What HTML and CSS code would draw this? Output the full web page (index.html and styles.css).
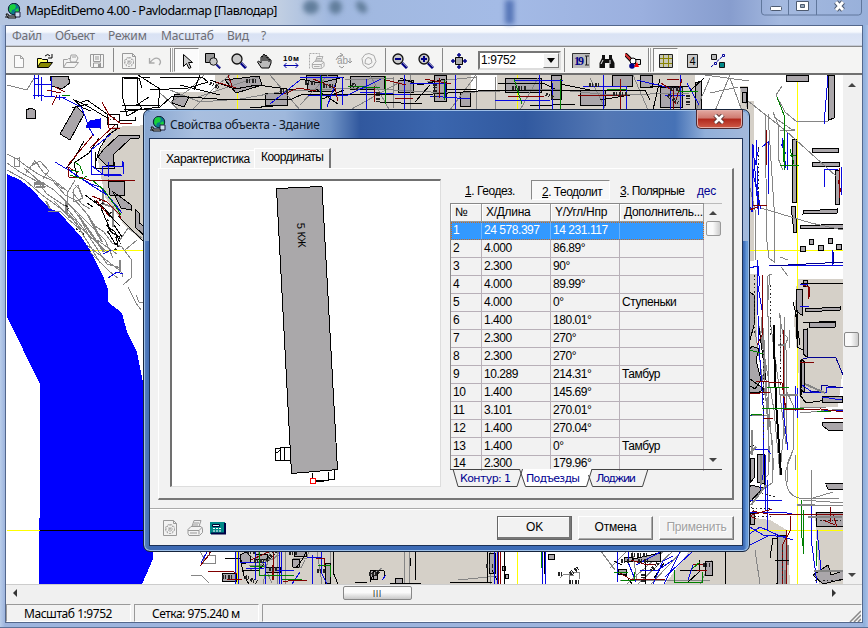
FILE: index.html
```html
<!DOCTYPE html>
<html lang="ru">
<head>
<meta charset="utf-8">
<title>MapEditDemo</title>
<link rel="stylesheet" href="styles.css">
</head>
<body>
<svg width="0" height="0" class="defs">
  <defs>
    <symbol id="app" viewBox="0 0 16 16">
      <circle cx="9" cy="6" r="5.7" fill="#0a7a8a" stroke="#123"/>
      <path d="M5 2l4-1 2 2-1 3-3 1-1 3-2-3zM10 7l3-2 1 3-2 3z" fill="#19d03a"/>
      <path d="M10 9h5v5h-5z" fill="#cde" stroke="#224"/>
      <path d="M1 11h2l1 2h6l1 2H3zM0 14h4" stroke="#111" fill="#bbb"/>
    </symbol>
    <symbol id="sheet" viewBox="0 0 16 16">
      <path d="M1.500 .5h10l3 3v12h-13zM11.500 .5v3h3" fill="none" stroke="#999"/>
      <circle cx="8" cy="9" r="4.500" fill="none" stroke="#999" stroke-dasharray="2 1"/>
      <path d="M8 4v10M3 9h10M5 6l6 6M11 6l-6 6" stroke="#aaa" stroke-dasharray="2 1"/>
    </symbol>
    <symbol id="printer" viewBox="0 0 16 16">
      <path d="M5 6.500L7 .5h7l-2 6M1 9.500l3-3h10l1.500 2v4l-3 3H2l-1-2zM1 10.500h11v4M12 10.500l3-3M3 13h7M7 3h5M6 5h5" fill="none" stroke="#999"/>
    </symbol>
    <symbol id="lens" viewBox="0 0 16 16">
      <path d="M10 10l5 5" stroke="#008" stroke-width="3"/>
      <path d="M10.500 9.500l5 5" stroke="#88a" stroke-width="1"/>
      <circle cx="6" cy="6" r="5" fill="#c8c8c8" stroke="#111" stroke-width="1.300"/>
    </symbol>
  </defs>
</svg>
<div class="window">
  <header class="titlebar">
    <svg class="app-icon"><use href="#app"/></svg>
    <span class="title">MapEditDemo 4.00 - Pavlodar.map [Павлодар]</span>
    <i class="blob b1"></i><i class="blob b2"></i><i class="blob b3"></i><i class="blob b4"></i>
    <div class="winbuttons">
      <svg width="104" height="16">
        <path d="M1.500 0v12q0 3 3 3h94q3 0 3-3V0M28.500 0v15M56.500 0v15" fill="none" stroke="#60779c"/>
        <rect x="10.500" y="6.500" width="11" height="4" rx="1" fill="#fff" stroke="#4d5a70"/>
        <path d="M36.500 1.500h12v9h-12z" fill="#fff" stroke="#4d5a70"/><path d="M40.500 4.500h4v3h-4z" fill="#9ab" stroke="#4d5a70"/>
        <path d="M76 2l7 8M83 2l-7 8" stroke="#4d5a70" stroke-width="5"/><path d="M76 2l7 8M83 2l-7 8" stroke="#fff" stroke-width="3"/>
      </svg>
    </div>
  </header>
  <div class="client">
    <nav class="menubar">
      <span class="m1">Файл</span><span class="m2">Объект</span><span class="m3">Режим</span><span class="m4">Масштаб</span><span class="m5">Вид</span><span>?</span>
    </nav>
    <div class="toolbar">
      <div class="tool"><svg viewBox="0 0 16 16"><path d="M3.500 2.500h6l3 3v9h-9zM9.500 2.500v3h3" fill="#fafafa" stroke="#a0a0a0"/></svg></div>
      <div class="tool"><svg viewBox="0 0 16 16"><path d="M.5 14.500v-9h4l1 1h5v3" fill="#ff6" stroke="#000"/><path d="M.5 14.500l3-5h12l-4 5z" fill="#880" stroke="#000"/><path d="M8 3q3-3 5 0M15 1v4h-4" fill="none" stroke="#000"/></svg></div>
      <div class="tool"><svg viewBox="0 0 16 16"><path d="M.5 14.500v-8h4l1-1h2M.5 14.500l3-5h12l-4 5zM7 7l1-5h5l2 3-2 4H8zM9 4h4" fill="none" stroke="#a0a0a0"/></svg></div>
      <div class="tool"><svg viewBox="0 0 16 16"><path d="M1.500 1.500h13v13h-12l-1-1zM4.500 1.500v7h7v-7M4.500 14v-4h7v4M6 4h4M6 6h4" fill="none" stroke="#999"/><path d="M9 11h2v3H9z" fill="#999"/></svg></div>
      <i class="sep"></i>
      <div class="tool"><svg><use href="#sheet"/></svg></div>
      <div class="tool"><svg viewBox="0 0 16 16"><path d="M2.500 5v5h5M3 9.500Q8 3 12 6q3 3 0 6" fill="none" stroke="#aaa" stroke-width="1.300"/></svg></div>
      <i class="sep double"></i>
      <div class="tool pressed"><svg viewBox="0 0 16 16"><path d="M4.500 1.500v12l3-3 2.500 5 2-1-2.500-5h4z" fill="#ccc" stroke="#000"/></svg></div>
      <div class="tool"><svg viewBox="0 0 16 16"><path d="M.5 .5h9v9h-9z" fill="#999" stroke="#000"/><svg x="4" y="4" width="12" height="12"><use href="#lens"/></svg></svg></div>
      <div class="tool"><svg><use href="#lens"/></svg></div>
      <div class="tool"><svg viewBox="0 0 16 16"><path d="M4.500 15l-4-6 1-1 2.500 2V4q1-1.500 2 0V2q1-1.500 2 0v1q1-1.500 2 0v2q1.500-1 2 0v2q1.500-1 2 0v3l-2 5z" fill="#bbb" stroke="#000"/><path d="M6 4v4M8 3v5M10 4v4M12 6v3" stroke="#000"/></svg></div>
      <div class="tool"><svg viewBox="0 0 16 16"><text x="0" y="8" class="ten" textLength="16">10м</text><path d="M1 12.500h14M3.500 10L1 12.500 3.500 15M12.500 10l2.500 2.500-2.500 2.500" stroke="#00a" fill="none"/></svg></div>
      <div class="tool"><svg viewBox="0 0 16 16"><path d="M.5 15.500V.5h10v3" fill="none" stroke="#aaa" stroke-dasharray="2 1"/><svg x="2" y="3" width="14" height="13"><use href="#printer"/></svg></svg></div>
      <div class="tool wide"><svg viewBox="0 0 18 16" width="18"><text x="3" y="11" class="ab">ab</text><path d="M2 7q1-4 6-5M6 0l3 2-3 2M16 5v5M14 8l2 2 2-2M10 13l-2 2-3-2" fill="none" stroke="#999"/></svg></div>
      <div class="tool"><svg viewBox="0 0 16 16"><path d="M8 .5l5 2 2 6-3 5-5 2-5-4-1-6 3-4zM7 4.500l3 1 1 4-3 2-4-1 .5-4z" fill="none" stroke="#aaa"/></svg></div>
      <i class="sep s5"></i>
      <div class="tool"><svg viewBox="0 0 16 16"><use href="#lens"/><path d="M3 6h6" stroke="#008" stroke-width="2"/></svg></div>
      <div class="tool"><svg viewBox="0 0 16 16"><use href="#lens"/><path d="M3 6h6M6 3v6" stroke="#008" stroke-width="2"/></svg></div>
      <i class="sep s7"></i>
      <div class="tool"><svg viewBox="0 0 16 16"><path d="M4.500 4.500h7v7h-7z" fill="#aaa" stroke="#000"/><path d="M8 0v4M8 12v4M0 8h4M12 8h4M6 2h4M6 14h4M2 6v4M14 6v4" stroke="#008" stroke-width="1.500"/></svg></div>
      <div class="combo"><span>1:9752</span><b class="combo-btn"><svg width="9" height="5"><path d="M0 0h8L4 5z"/></svg></b></div>
      <i class="sep s7"></i>
      <div class="tool"><svg viewBox="0 0 18 16" class="w18"><path d="M0 0h18v15H0z" fill="#bcbcbc"/><path d="M.5 15V.5H18" fill="none" stroke="#333"/><text x="2" y="12" class="nineteen" textLength="10">19</text><path d="M13 3h1.500v9H13M17 3h-2.500M17 12h-2.500" fill="none" stroke="#222"/></svg></div>
      <div class="tool"><svg viewBox="0 0 16 16"><path d="M3 2h3v4h4V2h3v3l2.500 5v5h-5v-5H6v5H.5v-5L3 5z" fill="#111"/><path d="M4 7l-2 4M11 7v4" stroke="#eee"/></svg></div>
      <div class="tool"><svg viewBox="0 0 16 16"><path d="M0 1l6 6" stroke="#000" stroke-width="4"/><path d="M0 1l6 6" stroke="#d33" stroke-width="2"/><path d="M10.500 6.500h5v5h-5z" fill="#ddd" stroke="#000"/><circle cx="8" cy="8" r="3" fill="#fff" stroke="#000"/><circle cx="7" cy="13" r="2.800" fill="#008"/><path d="M12 9l2 5H9z" fill="#f00"/></svg></div>
      <i class="sep s7 double"></i>
      <div class="tool pressed"><svg viewBox="0 0 16 16"><path d="M1.500 1.500h13v13h-13z" fill="#c8c8b8" stroke="#222"/><path d="M5.500 2v12M10.500 2v12M2 5.500h12M2 10.500h12" stroke="#8a8400"/></svg></div>
      <div class="tool"><svg viewBox="0 0 16 16"><path d="M3.500 1.500h10v13h-10z" fill="#c8c8c8" stroke="#222"/><text x="5.500" y="12" class="four">4</text></svg></div>
      <div class="tool"><svg viewBox="0 0 16 16"><path d="M1.500 1.500h5v5h-5z" fill="#bbb" stroke="#111"/><path d="M9.500 9.500h5v5h-5z" fill="#088" stroke="#111"/><path d="M1 14L14 2" stroke="#009" stroke-dasharray="3 1"/><path d="M12.500 1.500h2v2h-2zM4.500 9.500h2v2h-2z" fill="#fff" stroke="#009"/></svg></div>
    </div>
    <main class="view">
      <svg class="map" viewBox="7 75 836 509" width="836" height="509" shape-rendering="crispEdges">
        <!-- land parcels -->
        <g class="land">
          <path d="M113 127l36-2v122l-25-22-19-28-8-42zM210 92h488v40H210zM215 75h256v30H215zM497 75h198v40H497zM176 92h40v30h-40z"/>
          <path d="M740 86h8v15h6v160h-14zM740 274h17v115h-17zM797 279h46v88l-5 40h-38l-2-45-4-40z"/>
          <path d="M740 516l30 4 17 10 3 54h-40zM235 550h263v34H235zM815 512h28v72h-24zM690 550h60v34h-85z"/>
        </g>
        <path class="water" d="M7 174l13 6 13 10 10 12 7 7 7 2 9 9 9 10 7 8 8 12 5 10 8 16 5 13v13l14 11 5 19 10 20 16 80v127l-6 14-6 13H39v-51l1-33V384L7 317z"/>
        <!-- coordinate grid -->
        <path class="y" d="M7 250.500h836M7 530.500h836M237.500 75v509M517.500 75v509M797.500 75v509"/>
        <path class="k" d="M7 250.500h83M40 530.500h109"/>
        <!-- river bank -->
        <g class="g">
          <path d="M7 154l10 5 9 7 12 8 15 7 12 14 10 5 12 14 8 12 9 6 8 11 10 4 9 12v19l-8 7M7 163l13 9 18 10 9 12 18 12 18 22 11 16 13 20 14 4M24 168l14 12 16 10 20 20 18 25 12 17M7 170l18 10 17 15 14 10 16 13 17 26 11 19M34 160l10 13 16 12 8 7M48 211l12 0 8 8 12 10 8 14M75 180l-7 12-1 20 9 9 5 9"/>
          <path d="M14 159v7h5v-8zM26 173l9-12 5 6M31 166l9-5 9 10-6 8M34 182h9v5h-8zM36 186h10M75 185l4 4 3 8M54 201l30 30 24 22M60 195l45 45 8 18M72 192l10 12 8 5M30 173l15 15M128 287l8 16 5 7M136 295l3 7h6M7 85l20 5 7-12M120 269l3 8M87 245l32 25M90 252l20 20 8 6M80 218l10 20M97 240l20 14M55 183l8 6"/>
          <path class="thick" d="M35 184h10M120 260v12M103 188v16l10 3v20M108 180l10 6v12M50 209l-4-8M66 201v12l4 5M78 215l26 37M88 215l14 27"/>
          <path d="M73 190l5-5 5 13-10 4zM120 240l8-12 14 10M125 250l12-10"/>
        </g>
        <!-- north-west district -->
        <path class="b" d="M26 110l5-2 4 2v8H26zM80 110l4 4-14 26-10-6 16-28zM50 76h18l2 7-8 6-10-3zM108 181h16v14h-14zM129 135h10v3l-9 1-17 16v10h-7l-8-8 5-7 16-15zM118 195l13 10v5l-10-2-8-16zM135 209l4 4v10l10 6-3 8-11-10z"/>
        <path class="k" d="M122 77h15v25l5 6-15 8-2-10-3-10zM142 77l8 1M75 100l14 7 20 12M80 103l7-3 20 14v10h10v5l-9 6-8 13-4 13M72 108l16-4M73 99l10 9 8 3M109 114h10v9M124 110l25-1M124 79l15-1 3 10M149 97l-14 9M119 120h16v-3M99 138l-10 15-15 10 3 14M84 141l-10 18-8 9M95 152v16h19v-6M94 200l9 7 10 11M105 218l7 15 8 4-4 8-8-13M101 208l5 12M93 207l-6-4M120 242l-5-10-9-7M85 195l15 11 20 20M118 216l31 31M107 225l3 6 6 4 2 11M114 225l8 12"/>
        <path class="h" d="M111 212l-4 10M107 232h7l2 7M103 204l-5-6M66 205l3 7M76 229l8 5M115 250l5-7M115 118l-8 3M120 260"/>
        <path class="u fill" d="M86 127l4-6 10-2v9z"/>
        <path class="u" d="M34 75v24M38 75v22M34 84h18M33 95l33 3M51 77v20M63 98l18 9 4 9 4 12 5 8M55 162l15 9 12 8 9 6 16 10 14 17M67 167l8 8 16 9 9 3 15 17 7 9M91 163v-13l20-16M91 160v14h11v-8h20v-5M92 166l12 9h18M91 174h30M108 162v15M123 162v12M108 278l9-6 6 2M103 254l8-4M59 95v5M34 78h4M41 77v24"/>
        <path class="r" d="M108 117l1 11h11M102 102l7 13 11 8M78 173l-10-6 1 10 14 1 6 2h46M120 123h12M57 95l-5 10M47 90l14 3M92 196l15 6 12 12 2 5M96 200l13 16M90 148l13-12 12-11M68 165l25-30M55 87l10 5"/>
        <path class="n" d="M75 162l5 4 3 8M70 175l12 4 5-3M92 180l12 10 12 17 5 8M71 170l8 2M62 95h8"/>
        <!-- upper street strip -->
        <path class="b" d="M306 75h32l-4 16h-26zM350 76h34v13h-34zM398 80h15v12h-15zM434 75h12v26h-12zM505 78h36v14h-36zM551 75h10v24h-10zM612 75h20v11h-20zM660 87h22v20h-22zM695 83l6-2v30h-6zM225 80l34-4 3 9-26 8zM265 93h22v12h-22zM786 75h22v6h-22zM828 75h6v43l-5 2zM460 92h10v14h-10zM580 90h25v15h-25zM640 75h12v12h-12zM175 94l14 3-5 10-12-4z"/>
        <path class="g" d="M170 90l30 12 40-3 45-8 70-3 95 5 100-4 60 6 80-2M170 103l20-14 14-14M190 112l25-25 15-12M160 93l20 18M198 97l60-20M270 75l30 35M300 105l28-30M345 80l48-2v30M350 110l50-28M370 75l20 36M410 75v36M427 82l50-5M450 110l26-35M476 76v35M495 77v33M520 110l18-32M590 78l15 30M648 110l-15-35M696 110l14-32M715 111l15-36M705 75l44 6M710 93l28-6M730 78l12 33"/>
        <path class="k" d="M120 112l40-5 12-11 45 3 75 0 11-5 130 0 60-4h150M138 75l22 14-2 18M122 105h38M160 77h42l6 5-20 6-38 2M180 85l40 10M210 80l25 9 22-4 38 5M300 79l20 4 24-6M316 89l22 15M400 78l20 7 25-6M415 102l15-17M446 89h30M498 83h45l12 6M560 84l30 6M610 90h35l5 10M650 86h38M653 110l7-31M690 91l14-13M250 108l35-3M200 75l-6 15M320 100l24-10M380 102l42 2M530 106l45-2M600 100l30-5"/>
        <path class="u" d="M300 77h42v28M300 80l-30 24M308 95h40l33-16M320 75v35M366 79v32M404 75v35M410 83h35v15M430 96l40 3M455 75v36M495 100h55M515 80h48M539 75v36M552 83v27M583 86h43v24M603 75v35M637 80l33 8v23M680 75v36M687 83l12 22M665 95h20M360 92l50 3M335 85l-8 22"/>
        <path class="r" d="M216 82l20 6M228 75l4 11M284 94l14-6 18 3M313 79l22 9 3 13M386 80l20 5M395 98h18M425 79l26 5M508 96h36M578 95h50M620 79v30M661 83l12 8v20M682 79l-7 25M667 79h12M439 78v20M374 86v16"/>
        <path class="n" d="M321 76v33M385 76v28M348 86l32 2M444 80v20M514 79l8 25M560 79v31M607 89h20M678 91h20"/>
        <path class="h thick" d="M305 83h10M323 86h12M352 84l6 5M378 92v10M435 84v13M512 88h14M546 94l8 4M589 85h12M613 94h15M668 95l10 8M670 89h13M688 95v11M210 83l10 5M246 81h10M280 91h9"/>
        <!-- eastern district -->
        <path class="b" d="M740 87h7v22M742 92h4v10h-4zM792 139h4l1 63h-4zM791 206h4l2 26-3 1zM812 148h26v4h-26zM812 162h27v4h-27zM835 170h4v34h-3zM803 211l34-2v4l-34 1zM800 226l43-2v4h-43zM800 246h5v5h-5zM809 239h4v5h-4zM818 245h5v5h-5zM828 238h4v5h-4zM836 244h5v5h-5zM796 289h6v26l-5-3zM803 280h4v6h-4zM805 309l35-2v3l-35 2zM740 274l7 2v14l7 5v30l-4 15h-8v-16l-4-4z"/>
        <path class="g" d="M782 86l-6 9 9 17 12 10 31-1M748 101l38 30 50 45M765 112l2 130 2 16 5 4v-55l-6-93M773 112l5 12v34l5 12M774 117l17 12h4M780 130h15M761 208l50 15 32 7M769 275v10l-2 30M772 275q-5-2-5 7v35M780 257l8 3M781 267l7 9M770 319l8 60 8 65v-94l-7-37M768 316v80l6 74M763 328l5 85M784 317v110l-3 35M786 390l7 15v45l-5 12-1 20M793 450l-7 20q-2 25 13 28h40M746 170l9 40v50"/>
        <path class="g" d="M755 330l17 110v43l-16 12M758 320l16 90 6 65M761 317l9 145M750 416l18-1v60l-7 8M800 407h26M800 413l43-4M800 505h43M803 500l40 3M780 315v47M785 335l3 3-4 10M789 330v18M795 455v15M813 498l20-6M811 470v60"/>
        <path class="k" d="M793 302l3 12v25M795 310l5 35M797 310v37l6 3M803 323l33-2M801 360l-1 35 6 8 36-5M758 320l8 60M743 310v27M740 450l14-5M801 283h42M785 538h-12l-3 20"/>
        <path class="k thick" d="M774 325v20l2 57 5 73M801 360v35"/>
        <path class="b" d="M803 330l4-1v28l-4-3zM809 322h27l-1 5h-26zM802 359l3 4-1 30-3-4zM752 346l7 3-3 11 5 20-6 9-8-5v-30zM740 385l10-6 14 10-6 4-18-1zM822 396h20v6h-20zM822 422h21v8h-15l-5-4zM750 458h4v20l-4 5zM757 454h7v30l-7-2zM825 483h18v6h-15l-2-4M816 512h27v14h-27zM778 535h8l1 49h-10zM750 513h4v11h-4zM813 575l15-10 3 10 12-4v8l-20 5zM751 485l12 3-14 15-6-2z"/>
        <path class="u" d="M828 76l-4 48M752 144v68l-4-10M753 145l5 64M756 140l3 75M759 148l-6 25 8 36M784 132v38M787 133v37M786 154l-5-10M782 138l4 30M838 169h-14v18M841 167v28M762 147l6-5v52M769 266l28-1h46M740 270l18-4 2 20M757 285l2 60 4 60v70l-3 15M832 250v15M783 330v80l5 40M795 386v25M742 512h40l15 3M740 535l10-8 13 8 25 2M797 388v30M802 385l10 7h14v-5h20M811 505v33l6 45M817 530l4 40M740 540l20-13 20 9 13 4M752 449h15l4 5M750 545l20-10M800 284h8M800 306h9M767 480v50M757 260v20l5 30M842 400l-20-3M824 410h19M824 418h20M740 418l12-3M745 500h37M765 455v55"/>
        <path class="r" d="M839 168v30M753 205h14M750 210l8-3M803 285l6 2v10M808 287v12M783 330v60l3 20 35-1 22 3M784 409h20M785 405l-3-22-26-2M800 362h14M740 520l12-5 20-6M748 515l8 4M752 511l16 3 75 1M790 516v15l-8 15v38M786 530v54M830 507v15M823 520l12 5M833 514l4 13M750 394l20-2M758 207l-10 3M766 130v35M762 275v60l-5 10M825 418h18M763 418h10M838 180l3 12"/>
        <path class="n" d="M777 97l7 18v55M783 140v22M780 165h19M790 149l4 15M790 155h6M762 408h42M801 500v30l3 24M803 510v38M767 387h22M747 349l16 5M740 416l22-2M817 411h14M816 541v25"/>
        <path class="navy" d="M803 359l8-2 25 1 7 17M803 393l18-2v-6l22 3M770 266l73-4M833 252v12"/>
        <path class="g thick" d="M761 455v30M752 430v25M764 340v40M766 485l-15 20M741 462l15-15M780 395h18M797 505h18M808 517h34M814 571h30M805 384l20 9M788 545v20M785 570v14M778 345h8"/>
        <path class="h dots" d="M758 147v60M754 275v60M763 350v90M770 285v50M780 335v50M744 508h26M746 516h25M820 520h22M815 580h28M758 492l17 5M741 503l5-4 10 15M782 550v30"/>
        <!-- lower street strip -->
        <path class="g" d="M191 575h10l8 8M203 557v6h12v-8h-8M200 551l5 9M243 550l15 12 16-3 7-9M249 565h16v-15M250 570l30-15M257 550l15 33M270 550l-7 34M277 550v34M285 550v34M293 558h14l2-8M305 560l-4 8-7-3M317 550l5 34M330 550v34M404 550v34M409 550v34M372 575l10-7M458 580l40-4M490 550v34M500 550v34M560 578l4-4 10 2M569 582v-10h10v7M600 550l15 20M610 568l20-20M665 550l-38 34M674 550l-36 34M683 550l-32 34M620 580h90M632 550l5 30M712 560l-12 24M755 550l5 34"/>
        <path class="b" d="M240 555l6-3 4 4v6l-8 2zM255 554h12v5h-12zM265 567h15v5h-15zM292 559h8l-1 8h-6zM294 550h12v6h-12zM325 563h5v20h-5zM222 573h14v8h-14zM370 570h7v9h-7zM395 578h7v6h-7zM489 553h6v20h-6zM624 557h8v4h-8zM618 569h8v5h-8zM633 559l27-6v8h-26zM705 561h7v14h-7zM548 554h6v5h-6zM502 566h3v4h-3zM505 574h3v4h-3z"/>
        <path class="k" d="M225 558h15l4 18 5 8M243 570h16l5-6M296 568l6-8 4-8M333 550v22l5 12M370 582l5-12 9 1v7M355 582h12M373 570v10M390 583h31M410 558v8M415 552v28M450 582h42M487 550v33M492 570l7 14M504 551v33M544 550v24M625 574l7 10M622 565l-8-4M664 563l-10 15M645 561v23M680 570h24M699 560v12l-12 11M775 560h14M725 550v34"/>
        <path class="u" d="M201 563l7-13M235 550v34M238 550v34M240 562h25v22M246 568h18M255 550v30M275 570h19M279 550v34M281 550v34M312 555v29M321 550v22l6 12M307 557h15M300 572l-8 12M382 580l4-5M494 550v34M497 550v34M542 550v34M545 550v34M628 550v12l8 20M636 565l28-15M653 584l10-23 10-5M665 577l28-26M617 582v-32M640 570h18l15-10M693 565l-5 15M680 552l-16 32"/>
        <path class="r" d="M208 571h24l5 3M200 566l9-11 2-5M227 579h15M251 560l22-10v30M272 565v15M283 582l10-2h14M316 558h8v9M498 550v34M500 550v34M631 560l13 4h12M620 573l10 6h35M697 570h10M703 564h-10"/>
        <path class="n" d="M259 550v25h35M264 566h-14M318 565h12v12M302 579h-20M541 550v18M621 580h13v-8M674 570v12h28v-10M628 572h-14M700 562l-8 7"/>
        <path class="h thick" d="M222 577h10M247 552h9M254 561h12M276 551l-10 10M269 569h8M289 553h8M369 574h9M379 571l-7 4M317 571h8M486 566h7M558 574h6M570 574l8-6M569 582h10M621 561h8M631 555h18M638 561h10M643 574v8M658 563l-7 8M703 565h7M245 577l12 5"/>
      </svg>
      <div class="vscroll"><i class="up"></i><b class="vthumb"></b><i class="down"></i></div>
    </main>
    <div class="hscroll"><i class="left"></i><b class="hthumb">|||</b><i class="right"></i></div>
    <footer class="status"><span class="st1">Масштаб 1:9752</span><span class="st2">Сетка: 975.240 м</span><span class="st3"></span>
      <svg class="grip" width="12" height="13"><path d="M1 13L12 2M5 13l7-7M9 13l3-3" stroke="#888" stroke-width="1.500"/></svg>
    </footer>
  </div>
</div>

<section class="dialog">
  <header class="dlg-title">
    <svg class="app-icon"><use href="#app"/></svg>
    <span class="dlg-caption">Свойства объекта - Здание</span>
    <div class="close"><svg width="13" height="10"><path d="M2 1l8 8M10 1L2 9" stroke="#5b3535" stroke-width="4.500"/><path d="M2 1l8 8M10 1L2 9" stroke="#fff" stroke-width="2.500"/></svg></div>
  </header>
  <div class="dlg-body">
    <div class="tabs"><span class="tab t1"><em>Характеристика</em></span><span class="tab active"><em>Координаты</em></span></div>
    <div class="page">
      <div class="preview">
        <svg viewBox="172 181 268 305" width="268" height="305" shape-rendering="crispEdges">
          <path d="M276.500 188.500L322 186.500 337.500 469.500 291.500 473.500z" fill="#aaa8aa" stroke="#000"/>
          <path d="M290 447.500h-9.500v12.500h10M284.500 448v12M281 448.500h-5.500v11.500h5v-10l-4 3M312.500 473v8l17-1 5-1V470M328.500 472v8M314 482l10-1" fill="none" stroke="#000"/>
          <path d="M310.500 478.500h5v5h-5z" fill="#fff" stroke="#f00"/>
          <text class="floor" transform="translate(297 223) rotate(87)" textLength="25">5 КЖ</text>
        </svg>
      </div>
      <div class="right">
        <div class="modes"><span class="mode c1"><u>1</u>. Геодез.</span><span class="mode on"><u>2</u>. Теодолит</span><span class="mode c3"><u>3</u>. Полярные</span><span class="des">дес</span></div>
        <div class="gridwrap">
          <div class="grid">
            <div class="row head"><span>№</span><span>X/Длина</span><span>Y/Угл/Нпр</span><span>Дополнитель...</span></div>
            <div class="row sel"><span>1</span><span>24 578.397</span><span>14 231.117</span><span></span></div>
            <div class="row"><span>2</span><span>4.000</span><span>86.89°</span><span></span></div>
            <div class="row"><span>3</span><span>2.300</span><span>90°</span><span></span></div>
            <div class="row"><span>4</span><span>4.000</span><span>89.99°</span><span></span></div>
            <div class="row"><span>5</span><span>4.000</span><span>0°</span><span>Ступеньки</span></div>
            <div class="row"><span>6</span><span>1.400</span><span>180.01°</span><span></span></div>
            <div class="row"><span>7</span><span>2.300</span><span>270°</span><span></span></div>
            <div class="row"><span>8</span><span>2.300</span><span>270°</span><span></span></div>
            <div class="row"><span>9</span><span>10.289</span><span>214.31°</span><span>Тамбур</span></div>
            <div class="row"><span>10</span><span>1.400</span><span>145.69°</span><span></span></div>
            <div class="row"><span>11</span><span>3.101</span><span>270.01°</span><span></span></div>
            <div class="row"><span>12</span><span>1.400</span><span>270.04°</span><span></span></div>
            <div class="row"><span>13</span><span>1.400</span><span>0°</span><span>Тамбур</span></div>
            <div class="row last"><span>14</span><span>2.300</span><span>179.96°</span><span></span></div>
          </div>
          <div class="gscroll"><i class="up"></i><b class="gthumb"></b><i class="down"></i></div>
        </div>
        <svg class="sheets" width="272" height="19">
          <path d="M0 .5h272" stroke="#444"/>
          <path d="M69.500 0l6 17.500h61L142 0z" fill="#fff"/>
          <path d="M3 0l5 17.500h59L72.500 0M69.500 0l6 17.500h61L142 0M138.500 6l4 11.500h50L198 0" fill="none" stroke="#444"/>
          <text x="10" y="13" textLength="51">Контур: 1</text><text x="76" y="13" textLength="54">Подъезды</text><text x="146" y="13" textLength="40">Лоджии</text>
        </svg>
      </div>
    </div>
    <div class="actions">
      <svg class="act"><use href="#sheet"/></svg>
      <svg class="act a2"><use href="#printer"/></svg>
      <svg class="act" viewBox="0 0 16 16"><path d="M0 2h15v12H0z" fill="#088"/><path d="M1 13.500h14V3" stroke="#004" stroke-width="2" fill="none"/><path d="M2.500 4.500h7v2h-7z" fill="#dff" stroke="#003"/><path d="M3 8.500h9M3 11h9" stroke="#fff" stroke-dasharray="2 1"/></svg>
      <div class="btn ok"><em>OK</em></div><div class="btn cancel"><em>Отмена</em></div><div class="btn apply"><em>Применить</em></div>
    </div>
  </div>
</section>
</body>
</html>
```

FILE: styles.css
```css
* { box-sizing: border-box; }
body { margin: 0; width: 868px; height: 628px; overflow: hidden; position: relative; font: 12px "Liberation Sans", sans-serif; color: #000; }
.defs { position: absolute; }
em { font-style: normal; }
svg { display: block; flex: none; }
span { white-space: nowrap; }

/* main window */
.window { width: 868px; height: 628px; padding: 0 5px 5px; background: linear-gradient(90deg, #b9cdea 0, #9db4dd 5px, #9db4dd 862px, #8fb0dc 864px, #aac0e6 868px); border-bottom: 1px solid #5d7399; }
.titlebar { height: 25px; margin: 0 -5px; display: flex; align-items: flex-start; position: relative; background: linear-gradient(90deg, #b4c5e0 0, #c0cee2 280px, #a0b8df 330px, #a4bbe6 500px, #9bb0df 640px, #879dce 730px, #a4b9df 780px, #98b0da 868px); }
.app-icon { width: 16px; height: 16px; margin: 3px 0 0 5px; }
.title { font: 12.500px/21px "Noto Sans", sans-serif; margin-left: 5px; letter-spacing: -.53px; }
.blob { position: absolute; top: 0; height: 14px; width: 16px; border-radius: 50%; background: #627e9c; filter: blur(2.500px); }
.b1 { left: 303px; } .b2 { left: 329px; width: 13px; } .b3 { left: 357px; width: 9px; transform: rotate(-40deg); }
.b4 { left: 505px; width: 9px; height: 24px; background: #5877b8; border-radius: 0; }
.winbuttons { margin-left: auto; margin-right: 4px; width: 104px; height: 16px; }
.client { height: 598px; border: solid #53678c; border-width: 1px; background: #f2f2f2; }
.menubar { height: 20px; background: linear-gradient(#fff 0, #f5f8fd 6px, #d9e2f4 8px, #dee6f6 100%); border-bottom: 1px solid #c4cad6; display: flex; padding-left: 6px; font: 12px/20px "Noto Sans", sans-serif; color: #6e6e74; }
.m1 { width: 43px; letter-spacing: -.3px; } .m2 { width: 53px; letter-spacing: -.45px; } .m3 { width: 53px; letter-spacing: -.1px; } .m4 { width: 66px; letter-spacing: -.1px; } .m5 { width: 34px; letter-spacing: -.3px; }
.toolbar { height: 29px; border-top: 1px solid #888; border-bottom: 2px solid #707070; display: flex; align-items: center; background: #f4f4f3; }
.tool { width: 26px; height: 24px; display: flex; align-items: center; justify-content: center; flex: none; padding-top: 2px; }
.tool > svg { width: 16px; height: 16px; }
.tool.wide > svg, .tool > svg.w18 { width: 18px; }
.pressed { border: 1px solid; border-color: #888 #fff #fff #888; background: #fbfbfb; margin: 0 1px 0 0; width: 25px; }
.sep { width: 6px; height: 24px; flex: none; background: linear-gradient(#888, #888) 3px 0/1px 100% no-repeat; }
.sep.double { background: linear-gradient(90deg, #888 1px, #fff 1px, #fff 2px, #aaa 2px) 2px 0/3px 100% no-repeat; }
.s5 { width: 5px; } .s7 { width: 7px; }
.ten { font: bold 8px "Liberation Sans", sans-serif; }
.ab { font: 10px "Liberation Sans", sans-serif; fill: #999; }
.nineteen { font: bold 12px "Liberation Serif", serif; fill: #008; }
.four { font: 11px "Liberation Sans", sans-serif; }
.combo { width: 83px; height: 19px; margin-left: 6px; border: 2px solid; border-color: #777 #ddd #ddd #777; background: #fff; display: flex; justify-content: space-between; flex: none; line-height: 14px; padding-left: 1px; }
.combo span { letter-spacing: -.35px; }
.combo-btn { width: 16px; border: 1px solid; border-color: #fff #777 #777 #fff; background: #f0f0f0; display: flex; align-items: center; justify-content: center; }

.view { height: 509px; display: flex; padding-left: 1px; background: #fff; }
.map { background: #fff; }
.map path { fill: none; stroke-width: 1; }
.map .land path { fill: #d5d0c8; }
.map .water, .map .fill { fill: #00f; }
.map .b { fill: #aaa6aa; stroke: #000; }
.map .k { stroke: #000; } .map .g, .map .g path { stroke: #858585; }
.map .u { stroke: #0808e0; } .map .r { stroke: #800000; } .map .n { stroke: #008000; } .map .y { stroke: #ff0; } .map .navy { stroke: #000090; }
.map .h { stroke: #222; stroke-dasharray: 2 2 1 3; stroke-width: 2; }
.map .dots { stroke-width: 1; }
.map .thick, .map .g .thick { stroke-width: 2; } .map .h.thick { stroke-width: 4; stroke-dasharray: 2 1 1 2; }
.vscroll { width: 19px; background: #f0f0f0; display: flex; flex-direction: column; align-items: center; padding: 8px 2px 7px 0; }
.up, .down, .left { width: 0; height: 0; border: 4px solid transparent; flex: none; }
.up { border-width: 0 4px 4px; border-bottom-color: #444; }
.down { border-width: 4px 4px 0; border-top-color: #444; }
.left { border-width: 4px 4px 4px 0; border-right-color: #333; }
i.right { width: 0; height: 0; border: solid transparent; border-width: 4px 0 4px 4px; border-left-color: #333; }
.vthumb { width: 15px; height: 15px; border: 1px solid #888; border-radius: 2px; background: linear-gradient(90deg, #fafafa 45%, #ccc); margin-top: 245px; }
.vscroll .down { margin-top: auto; }
.hscroll { height: 20px; border-top: 1px solid #ccc; display: flex; align-items: center; padding: 0 26px 3px 7px; background: #f0f0f0; }
.hthumb { width: 69px; height: 14px; margin-left: 326px; border: 1px solid #888; border-radius: 2px; background: linear-gradient(#fafafa 45%, #c8c8c8); font: 8px/12px "Liberation Sans", sans-serif; text-align: center; letter-spacing: 1px; }
.hscroll .right { margin-left: auto; }
.status { height: 18px; display: flex; font: 12px/18px "Noto Sans", sans-serif; position: relative; }
.status span { border: 1px solid; border-color: #999 #fff #fff #999; height: 18px; }
.st1 { width: 125px; margin-right: 3px; padding-left: 17px; letter-spacing: -.45px; }
.st2 { width: 125px; margin-right: 3px; padding-left: 17px; letter-spacing: -.5px; }
.st3 { flex: 1; }
.grip { position: absolute; right: 1px; bottom: 0; }

/* properties dialog */
.dialog { position: absolute; left: 143px; top: 109px; width: 607px; height: 443px; border: 1px solid #16243c; border-radius: 7px; padding: 0 6px 6px 5px; background: linear-gradient(90deg, #5c83c0 0, #3c69b2 6px, #3d6db8 600px, #6da0dd 603px, #315a9c 607px); box-shadow: inset 0 0 0 1px #9ec0e8; }
.dialog::before { content: ""; position: absolute; inset: 1px 1px 310px; border-radius: 6px 6px 0 0; background: linear-gradient(90deg, #88a6d0 0, #a9bfdf 50px, #9fb8dc 140px, #7194c6 185px, #31589e 215px, #3b66ae 290px, #31599f 380px, #5478b4 460px, #4672b6 530px, #91afd9 560px, #a3b9db 100%); }
.dlg-title { position: relative; height: 28px; display: flex; }
.dlg-title .app-icon { margin: 6px 0 0 1px; }
.dlg-caption { font: 12px/29px "Noto Sans", sans-serif; margin-left: 4px; letter-spacing: -.27px; color: #101828; }
.close { margin-left: auto; width: 47px; height: 19px; border: 1px solid #4e2a30; border-top: 0; border-radius: 0 0 5px 5px; background: linear-gradient(#e3aaa2 0, #cf7a70 45%, #b0281c 50%, #cf5b48 100%); box-shadow: inset 0 0 0 1px #e4b0aa; display: flex; align-items: center; justify-content: center; }
.dlg-body { position: relative; height: 408px; border: 1px solid #1c3156; background: #f2f2f2; padding: 9px 8px 0; }
.tabs { height: 20px; display: flex; align-items: flex-end; }
.tab { display: block; height: 18px; border-left: 1px solid #fff; border-top: 1px solid #fff; padding: 1px 0 0 5px; }
.t1 { margin-left: 2px; width: 94px; letter-spacing: -.38px; }
.active { width: 77px; height: 20px; border-right: 2px solid #777; padding: 1px 0 0 6px; letter-spacing: -.52px; }
.page { height: 332px; width: 576px; border: 1px solid #fff; border-right: 2px solid #777; border-bottom: 2px solid #777; display: flex; padding: 10px 0 0 11px; }
.preview { width: 271px; height: 308px; border: solid; border-width: 2px 1px 1px 2px; border-color: #707070 #ddd #ddd #707070; background: #fff; }
.floor { font: 11px "Liberation Sans", sans-serif; }
div.right { margin: 1px 0 0 9px; width: 272px; }
.modes { height: 23px; display: flex; }
.mode { padding: 5px 0 0; height: 20px; line-height: 13px; letter-spacing: -.45px; }
.c1 { width: 81px; padding-left: 15px; } .c3 { width: 77px; padding-left: 10px; letter-spacing: -.55px; }
.mode.on { width: 79px; border: 1px solid; border-color: #888 #fff #fff #888; padding: 5px 0 0 10px; background: #f8f8f8; letter-spacing: -.5px; }
.des { color: #000090; padding: 5px 0 0 10px; line-height: 13px; letter-spacing: -.2px; }
.gridwrap { display: flex; height: 266px; }
.grid { width: 254px; height: 266px; border-left: 1px solid #888; border-top: 1px solid #888; }
.row { display: grid; grid-template-columns: 31px 69px 69px 84px; height: 18px; line-height: 16px; font-size: 12px; }
.row span { border-right: 1px solid #b8b0b8; border-bottom: 1px solid #b8b0b8; padding-left: 2px; letter-spacing: -.45px; }
.row.head span { padding-left: 4px; border-color: #999; box-shadow: inset 1px 1px #fff; letter-spacing: -.3px; }
.row.last { height: 13px; line-height: 15px; }
.row.last span { border-bottom: 0; }
.row.sel { background: #3399ff; color: #fff; outline: 1px dotted #c76a20; outline-offset: -1px; }
.row.sel span { border-color: #3399ff #6bb4ff #3399ff; }
.gscroll { width: 18px; display: flex; flex-direction: column; align-items: center; padding: 7px 0 7px; border-top: 1px solid #bbb; }
.gthumb { width: 15px; height: 15px; border: 1px solid #999; border-radius: 2px; background: linear-gradient(90deg, #fafafa 45%, #ccc); margin-top: 6px; }
.gscroll .down { margin-top: auto; }
.sheets text { font: 11px "DejaVu Sans", sans-serif; fill: #000090; }
.actions { margin: 8px -8px 0; border-top: 1px solid #aaa; box-shadow: inset 0 1px #fff; padding: 7px 0 0 12px; display: flex; }
.act { width: 16px; height: 16px; margin: 4px 9px 0 0; }
.a2 { margin-right: 7px; }
.btn { width: 75px; height: 24px; border: 1px solid; border-color: #fff #777 #777 #fff; box-shadow: inset -1px -1px #aaa; text-align: center; line-height: 21px; margin-right: 6px; letter-spacing: -.2px; }
.ok { margin-left: 262px; border: 1px solid #666; box-shadow: inset -2px -2px #777, inset 1px 1px #fff; }
.apply { color: #a0a0a0; text-shadow: 1px 1px #fff; }
```
